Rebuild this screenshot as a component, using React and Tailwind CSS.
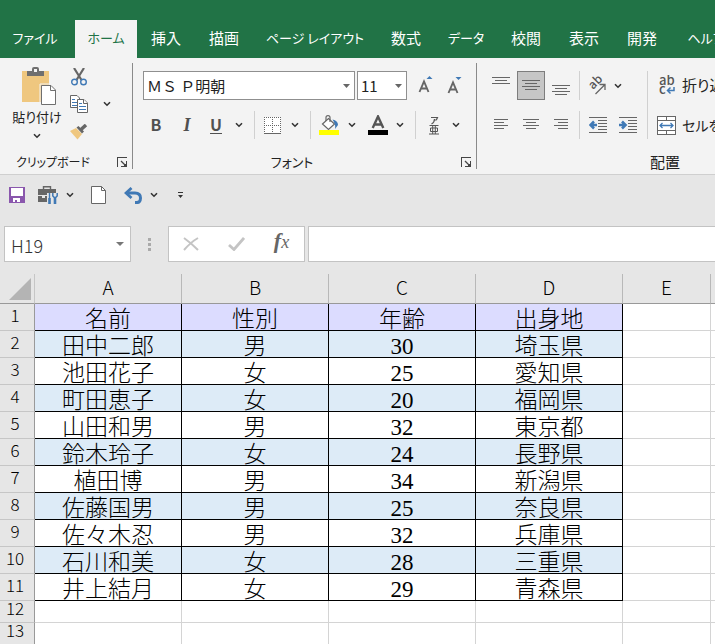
import React from 'react';
import clsx from 'clsx';

const tabs = [
  { label: 'ファイル', width: 'w-[70px] mr-[5px]', kana: true },
  { label: 'ホーム', width: 'w-[62px]', active: true, kana: true },
  { label: '挿入', width: 'w-[58px]' },
  { label: '描画', width: 'w-[58px]' },
  { label: 'ページ レイアウト', width: 'w-[124px]', kana: true },
  { label: '数式', width: 'w-[58px]' },
  { label: 'データ', width: 'w-[62px]', kana: true },
  { label: '校閲', width: 'w-[58px]' },
  { label: '表示', width: 'w-[58px]' },
  { label: '開発', width: 'w-[58px]' },
  { label: 'ヘルプ', width: 'w-[70px]', kana: true },
];

const columns = ['A', 'B', 'C', 'D', 'E', ''];

const people = [
  ['名前', '性別', '年齢', '出身地'],
  ['田中二郎', '男', '30', '埼玉県'],
  ['池田花子', '女', '25', '愛知県'],
  ['町田恵子', '女', '20', '福岡県'],
  ['山田和男', '男', '32', '東京都'],
  ['鈴木玲子', '女', '24', '長野県'],
  ['植田博', '男', '34', '新潟県'],
  ['佐藤国男', '男', '25', '奈良県'],
  ['佐々木忍', '男', '32', '兵庫県'],
  ['石川和美', '女', '28', '三重県'],
  ['井上結月', '女', '29', '青森県'],
];

function Chevron() {
  return (
    <svg width="8" height="6" viewBox="0 0 8 6" fill="none" stroke="#333" strokeWidth="1.6">
      <path d="M1 1.2 4 4.2 7 1.2" />
    </svg>
  );
}

function Menu({ label, className }) {
  return (
    <button aria-label={label} className={clsx('flex shrink-0 items-center justify-center', className)}>
      <Chevron />
    </button>
  );
}

function Tool({ label, className, children }) {
  return (
    <button aria-label={label} className={clsx('flex shrink-0 items-center justify-center', className)}>
      {children}
    </button>
  );
}

function Divider({ className }) {
  return <div className={clsx('w-px shrink-0 self-stretch bg-[#d0d0d0]', className)} />;
}

function Launcher({ label }) {
  return (
    <button aria-label={label}>
      <svg width="11" height="11" viewBox="0 0 11 11" fill="none" stroke="#444" shapeRendering="crispEdges">
        <path d="M.5 10V.5H10" />
        <path d="M4 4l5 5" strokeWidth="1.3" shapeRendering="auto" />
        <path d="M9.5 4v5.5H4" />
        <path d="M7 8.5h2M8.5 7v2" />
      </svg>
    </button>
  );
}

// Each line is [x, y, width]
function Lines({ lines, width = 18, height = 18 }) {
  return (
    <svg width={width} height={height} viewBox={`0 0 ${width} ${height}`} fill="#666" shapeRendering="crispEdges">
      {lines.map(([x, y, w]) => (
        <rect key={y} x={x} y={y} width={w} height="1" />
      ))}
    </svg>
  );
}

function IndentIcon({ right }) {
  return (
    <svg width="18" height="16" viewBox="0 0 18 16">
      <g fill="#666" shapeRendering="crispEdges">
        <rect width="18" height="1" />
        <rect x="9" y="3" width="9" height="1" />
        <rect x="9" y="6" width="9" height="1" />
        <rect x="9" y="9" width="9" height="1" />
        <rect x="9" y="12" width="9" height="1" />
        <rect y="15" width="18" height="1" />
      </g>
      <path
        d={right ? 'M0 8h6.500M3 4.500 6.500 8 3 11.500' : 'M8 8H1.500M5 4.500 1.500 8 5 11.500'}
        fill="none"
        stroke="#4079b5"
        strokeWidth="2.600"
      />
    </svg>
  );
}

function PasteIcon() {
  return (
    <svg width="34" height="38" viewBox="0 0 34 38">
      <rect y="4" width="27" height="31" fill="#efc77f" />
      <path d="M5 4h5V2q0-2 2-2h3q2 0 2 2v2h5v5H5z" fill="#6f6f6f" />
      <rect x="12" y="2" width="3" height="3" fill="#f3f3f3" />
      <path d="M18 36V17h11" fill="none" stroke="#f3f3f3" />
      <path d="M19.500 18.500H29l4.500 4.500v14.500h-14z" fill="#fff" stroke="#6f6f6f" />
      <path d="M28.500 18.500v5h5" fill="none" stroke="#6f6f6f" />
    </svg>
  );
}

function CutIcon() {
  return (
    <svg width="16" height="18" viewBox="0 0 16 18" fill="none">
      <path d="M3 0 10.500 12M13 0 5.500 12" stroke="#666" strokeWidth="2.200" />
      <circle cx="3.500" cy="14" r="2.800" stroke="#4079b5" strokeWidth="1.400" />
      <circle cx="12.500" cy="14" r="2.800" stroke="#4079b5" strokeWidth="1.400" />
    </svg>
  );
}

function CopyIcon() {
  return (
    <svg width="18" height="18" viewBox="0 0 18 18" fill="#fff" stroke="#666">
      <path d="M.5.5H7L9.500 3v9.500h-9z" />
      <path d="M2 4.500h3M2 7.500h5M2 10.500h5" stroke="#4079b5" />
      <path d="M7.500 4.500H14L17.500 8v9.500h-10z" />
      <path d="M13.500 4.500v4h4" />
      <path d="M9 8.500h3M9 11.500h7M9 14.500h7" stroke="#4079b5" />
    </svg>
  );
}

function BrushIcon() {
  return (
    <svg width="18" height="16" viewBox="0 0 18 16">
      <path d="M0 7 6 4l6 6-4.500 5.500z" fill="#efc77f" />
      <path d="M6.500 3.500 8.500 2l5.500 5.500-2 2z" fill="#666" />
      <path d="M11 5.500 16 1" stroke="#666" strokeWidth="3.500" />
    </svg>
  );
}

function ClipboardGroup() {
  return (
    <section className="flex w-[133px] shrink-0 flex-col border-r border-[#8a8a8a]">
      <div className="flex">
        <button className="ml-[11px] flex w-[52px] flex-col items-center pt-1 whitespace-nowrap">
          <span className="pl-1">
            <PasteIcon />
          </span>
          <span className="text-[13px] leading-6">貼り付け</span>
          <span className="pt-1">
            <Chevron />
          </span>
        </button>
        <div className="ml-1.5 flex flex-col">
          <Tool label="切り取り" className="h-[27px] w-5"><CutIcon /></Tool>
          <Tool label="コピー" className="h-7 w-5"><CopyIcon /></Tool>
          <Tool label="書式のコピー" className="h-7 w-5"><BrushIcon /></Tool>
        </div>
        <Menu label="コピーのオプション" className="mt-[27px] ml-3 h-7 w-3" />
      </div>
      <div className="mt-auto flex h-3.5 items-center pr-1 pl-4">
        <span className="mr-auto text-[12px]">クリップボード</span>
        <Launcher label="クリップボードの設定" />
      </div>
    </section>
  );
}

function SelectBox({ label, value, className }) {
  return (
    <div className={clsx('relative h-[29px] shrink-0', className)}>
      <select
        aria-label={label}
        defaultValue={value}
        className="h-full w-full appearance-none rounded-none border border-[#8f8f8f] bg-white px-[3px] text-[15px] leading-[27px] text-[#222] [font-feature-settings:normal]"
      >
        <option>{value}</option>
      </select>
      <svg className="pointer-events-none absolute top-[13px] right-[5px]" width="7" height="4" viewBox="0 0 7 4" fill="#666">
        <path d="M0 0h7L3.500 4z" />
      </svg>
    </div>
  );
}

function FontGroup() {
  return (
    <section className="flex w-[344px] shrink-0 flex-col border-r border-[#8a8a8a] pt-2 pl-2.5">
      <div className="mb-[11px] flex">
        <SelectBox label="フォント名" value="ＭＳ Ｐ明朝" className="w-[212px]" />
        <SelectBox label="フォント サイズ" value="11" className="ml-0.5 w-[50px]" />
        <Tool label="フォント サイズの拡大" className="ml-1 w-[30px]">
          <svg width="16" height="20" viewBox="0 0 16 20">
            <path d="M1.500 16 6 5.500 10.500 16M3 12.500h6" fill="none" stroke="#666" strokeWidth="1.900" />
            <path d="M8.500 3h6L11.500 0z" fill="#4079b5" />
          </svg>
        </Tool>
        <Tool label="フォント サイズの縮小" className="w-[28px]">
          <svg width="16" height="20" viewBox="0 0 16 20">
            <path d="M1.500 17 6 6.500 10.500 17M3 13.500h6" fill="none" stroke="#666" strokeWidth="1.900" />
            <path d="M8.500 1h6l-3 3z" fill="#4079b5" />
          </svg>
        </Tool>
      </div>
      <div className="flex h-7 text-[#505050]">
        <button className="w-[26px] pb-0.5 text-base font-bold">B</button>
        <button className="w-9 pb-0.5 font-['Liberation_Serif',serif] text-lg font-bold italic">I</button>
        <button className="w-[22px] pb-0.5 text-base font-bold underline underline-offset-2">U</button>
        <Menu label="下線の種類" className="w-6" />
        <Divider className="ml-[3px]" />
        <Tool label="罫線" className="w-[34px]">
          <svg width="17" height="17" viewBox="0 0 17 17" fill="none" stroke="#666" shapeRendering="crispEdges">
            <rect width="17" height="17" fill="#fff" stroke="none" />
            <path d="M0 .5h17M0 8.500h17M.5 0v16M8.500 0v16M16.500 0v16" strokeDasharray="1 1" />
            <path d="M0 16.500h17" />
          </svg>
        </Tool>
        <Menu label="罫線の種類" className="w-3" />
        <Divider className="ml-[9px]" />
        <Tool label="塗りつぶしの色" className="w-9">
          <svg width="20" height="20" viewBox="0 0 20 20" fill="none" stroke="#666" strokeWidth="1.200">
            <path d="M3.500 9 9.500 3.500l6 5.500-6 5.500z" fill="#fff" />
            <path d="M7 6V2.500Q7 .6 9 .6t2 1.900V7" />
            <path d="M13.500 4.500q5.500 1 5.500 5.500l-3 4q1-4-2.500-9.500z" fill="#4079b5" stroke="none" />
            <rect y="15" width="20" height="5" fill="#ff0" stroke="none" />
          </svg>
        </Tool>
        <Menu label="塗りつぶしの色の選択" className="w-2.5" />
        <Tool label="フォントの色" className="ml-[3px] w-9">
          <svg width="20" height="20" viewBox="0 0 20 20">
            <path d="M4.700 13 10 1.500 15.300 13M6.500 9.500h7" fill="none" stroke="#555" strokeWidth="2.400" />
            <rect y="15" width="20" height="5" />
          </svg>
        </Tool>
        <Menu label="フォントの色の選択" className="w-2" />
        <Divider className="ml-[11px]" />
        <Tool label="ふりがなの表示" className="w-9">
          <svg width="10" height="19" viewBox="0 0 10 19" fill="none" stroke="#555" shapeRendering="geometricPrecision">
            <path d="M2 1.500h6.500Q8 3 6.500 4.500M5.500 3Q5.500 6.500 2.500 8" strokeWidth="1.200" />
            <path d="M.5 9.500h9M0 18h10M1.500 12h7v3.500h-7zM3.700 9.500V18M6.300 9.500V18" />
          </svg>
        </Tool>
        <Menu label="ふりがなの設定" className="w-2" />
      </div>
      <div className="mt-auto flex h-3.5 items-center pr-1">
        <span className="flex-1 pr-5 text-center text-[13px]">フォント</span>
        <Launcher label="フォントの設定" />
      </div>
    </section>
  );
}

function AlignmentGroup() {
  return (
    <section className="flex w-[376px] shrink-0 flex-col pt-2">
      <div className="flex">
        <div className="ml-[9px] w-[161px] shrink-0">
          <div className="mb-[11px] flex h-[29px]">
            <Tool label="上揃え" className="w-[30px]">
              <Lines lines={[[0, 0, 18], [3, 3, 12], [0, 6, 18]]} />
            </Tool>
            <Tool label="上下中央揃え" className="mx-px w-7 border border-[#7d7d7d] bg-[#c6c6c6]">
              <Lines lines={[[0, 3, 18], [3, 6, 12], [0, 9, 18], [3, 12, 12]]} />
            </Tool>
            <Tool label="下揃え" className="w-[30px]">
              <Lines lines={[[0, 8, 18], [3, 11, 12], [0, 14, 18], [3, 17, 12]]} />
            </Tool>
            <Divider className="ml-[3px]" />
            <Tool label="方向" className="w-[34px]">
              <svg width="20" height="20" viewBox="0 0 20 20">
                <text x="6" y="14" transform="rotate(-45 6 14)" className="fill-[#555] text-[12px] font-medium">ab</text>
                <path d="M8.500 18 18 8.500M12.500 8.500H18V14" fill="none" stroke="#666" strokeWidth="1.300" />
              </svg>
            </Tool>
            <Menu label="方向の選択" className="w-2" />
          </div>
          <div className="flex h-7">
            <Tool label="左揃え" className="w-[30px]">
              <Lines width={14} height={12} lines={[[0, 0, 14], [0, 3, 10], [0, 6, 14], [0, 9, 10]]} />
            </Tool>
            <Tool label="中央揃え" className="w-[30px]">
              <Lines width={16} height={12} lines={[[0, 0, 16], [3, 3, 10], [0, 6, 16], [3, 9, 10]]} />
            </Tool>
            <Tool label="右揃え" className="w-[30px]">
              <Lines width={14} height={12} lines={[[0, 0, 14], [4, 3, 10], [0, 6, 14], [4, 9, 10]]} />
            </Tool>
            <Divider className="ml-[3px]" />
            <Tool label="インデントを減らす" className="w-9"><IndentIcon /></Tool>
            <Tool label="インデントを増やす" className="w-6"><IndentIcon right /></Tool>
          </div>
        </div>
        <Divider />
        <div className="shrink-0 pl-[9px]">
          <button className="mb-[11px] flex h-[29px] items-center gap-1.5 text-[15px] whitespace-nowrap">
            <svg width="19" height="22" viewBox="0 0 19 22">
              <text x="2" y="10" className="fill-[#555] text-[13px] font-medium">ab</text>
              <text x="2" y="19" className="fill-[#555] text-[13px] font-medium">c</text>
              <path d="M17 12v3.500h-6M13.500 12.500l-3 3 3 3" fill="none" stroke="#4079b5" strokeWidth="1.500" />
            </svg>
            折り返して全体を表示する
          </button>
          <button className="flex h-7 items-center gap-1.5 text-[14px] whitespace-nowrap">
            <svg width="19" height="19" viewBox="0 0 19 19" fill="none" stroke="#666">
              <rect x=".5" y=".5" width="18" height="18" fill="#fff" />
              <path d="M.5 4.500h18M.5 14.500h18M9.500 0v4.500M9.500 14.500V19" />
              <path d="M3 9.500h13M5.500 7 3 9.500 5.500 12M13.500 7 16 9.500 13.500 12" stroke="#4079b5" strokeWidth="1.300" />
            </svg>
            セルを結合して中央揃え
          </button>
        </div>
      </div>
      <div className="mt-auto flex h-3.5 items-center justify-center text-[15px]">配置</div>
    </section>
  );
}

function QuickAccess() {
  return (
    <div className="flex h-10 items-stretch">
      <Tool label="上書き保存" className="w-[34px]">
        <svg width="16" height="16" viewBox="0 0 16 16" fill="#8a57ad">
          <path d="M0 0h16v16H0z" />
          <path d="M2 1h12v8H2zM4 11h7v4H8v-2H6v2H4z" fill="#fff" />
        </svg>
      </Tool>
      <Tool label="ツール" className="w-7">
        <svg width="20" height="19" viewBox="0 0 20 19">
          <path d="M0 3h18v6H0zM0 10h18v6H0z" fill="#666" />
          <path d="M5.500 3V.7h7V3" fill="none" stroke="#666" strokeWidth="1.400" />
          <path d="M9 7h11v12H9z" fill="#e6e6e6" />
          <path d="M11.500 7v5" stroke="#4079b5" strokeWidth="1.400" />
          <path d="M11.500 12v6M17 11v7" stroke="#4079b5" strokeWidth="2.600" />
          <path d="M14.800 7v3l2.200 2 2.200-2V7" fill="none" stroke="#4079b5" strokeWidth="1.500" />
          <path d="M4 9h3v3H4z" fill="#e6e6e6" />
        </svg>
      </Tool>
      <Menu label="ツールの選択" className="w-4" />
      <Tool label="新規作成" className="w-10">
        <svg width="15" height="18" viewBox="0 0 15 18" fill="#fff" stroke="#666">
          <path d="M.5.5h10l4 4v13H.5z" />
          <path d="M10.500.5v4h4" fill="none" />
        </svg>
      </Tool>
      <Tool label="元に戻す" className="w-[30px]">
        <svg width="19" height="17" viewBox="0 0 19 17" fill="none" stroke="#4079b5">
          <path d="M2 6h9q5.500 0 5.500 5T12 15.500h-1" strokeWidth="3" />
          <path d="M7.500 1 2 6l5.500 5" strokeWidth="2.800" />
        </svg>
      </Tool>
      <Menu label="元に戻す操作の選択" className="w-3" />
      <Tool label="クイック アクセス ツール バーのカスタマイズ" className="w-10">
        <svg width="5" height="6" viewBox="0 0 5 6" fill="#333">
          <path d="M0 0h5v1H0zM0 3h5L2.500 6z" />
        </svg>
      </Tool>
    </div>
  );
}

function FormulaBar() {
  return (
    <div className="mt-[11px] mb-3 flex h-9 pl-1">
      <div className="relative w-[127px] shrink-0">
        <input
          aria-label="名前ボックス"
          defaultValue="H19"
          className="h-full w-full border border-[#c3c3c3] bg-white px-1.5 pt-0.5 text-[18px] font-light text-[#333]"
        />
        <svg className="absolute top-4 right-[7px]" width="8" height="4" viewBox="0 0 8 4" fill="#777">
          <path d="M0 0h8L4 4z" />
        </svg>
      </div>
      <svg className="mx-[17px] shrink-0 self-center" width="3" height="13" viewBox="0 0 3 13" fill="#aaa">
        <path d="M0 0h3v3H0zM0 5h3v3H0zM0 10h3v3H0z" />
      </svg>
      <div className="flex w-[137px] shrink-0 items-center border border-[#c3c3c3] bg-white">
        <Tool label="キャンセル" className="h-full w-11">
          <svg width="16" height="14" viewBox="0 0 16 14" fill="none" stroke="#c4c4c4" strokeWidth="2">
            <path d="M1 1q7 5 14 12M15 1Q8 5 1 13" />
          </svg>
        </Tool>
        <Tool label="入力" className="h-full w-[46px]">
          <svg width="17" height="14" viewBox="0 0 17 14" fill="none" stroke="#c4c4c4" strokeWidth="2.800">
            <path d="m1 8 5 4.500L16 1" />
          </svg>
        </Tool>
        <button className="h-full w-[45px] pb-1 font-['Liberation_Serif',serif] text-[22px] leading-none font-bold text-[#666] italic">
          f<span className="text-lg font-normal">x</span>
        </button>
      </div>
      <input aria-label="数式バー" className="ml-[3px] min-w-0 flex-1 border border-r-0 border-[#c3c3c3] bg-white" />
    </div>
  );
}

function RowHeader({ number, short }) {
  return (
    <th
      scope="row"
      className={clsx(
        'border-r border-b border-r-[#999] border-b-[#c6c6c6] p-0 pr-1 align-top text-[17px] font-light',
        short ? 'leading-[13px]' : 'leading-[22px]'
      )}
    >
      {number}
    </th>
  );
}

function Sheet() {
  return (
    <table className="w-full table-fixed border-separate border-spacing-0 text-center text-black">
      <colgroup>
        <col className="w-[35px]" />
        <col className="w-[147px]" />
        <col className="w-[147px]" />
        <col className="w-[147px]" />
        <col className="w-[147px]" />
        <col className="w-[88px]" />
        <col />
      </colgroup>
      <thead>
        <tr className="h-[30px]">
          <th aria-label="すべて選択" className="border-r border-b border-r-[#c6c6c6] border-b-[#999] p-0">
            <svg className="mr-[3px] ml-auto" width="22" height="22" viewBox="0 0 22 22" fill="#b4b4b4">
              <path d="M22 0v22H0z" />
            </svg>
          </th>
          {columns.map((column) => (
            <th
              key={column}
              scope="col"
              className="border-r border-b border-r-[#b8b8b8] border-b-[#999] p-0 align-top text-[19px] leading-[26px] font-light last:border-r-0"
            >
              {column}
            </th>
          ))}
        </tr>
      </thead>
      <tbody>
        {people.map((person, row) => (
          <tr key={row} className="h-[27px]">
            <RowHeader number={row + 1} />
            {person.map((value, i) => (
              <td
                key={i}
                className={clsx(
                  "border-r border-b border-black p-0 pt-[5px] font-['Liberation_Serif','Noto_Sans_CJK_JP',serif] text-[23px] leading-[21px]",
                  row > 0 && i === 2 ? 'font-normal' : 'font-light',
                  row === 0 ? 'bg-[#dcdcff]' : row % 2 ? 'bg-[#ddebf7]' : 'bg-white'
                )}
              >
                {value}
              </td>
            ))}
            <td className="border-r border-b border-[#d4d4d4] bg-white p-0" />
            <td className="border-b border-[#d4d4d4] bg-white p-0" />
          </tr>
        ))}
        {[12, 13].map((number) => (
          <tr key={number} className="h-[22px]">
            <RowHeader number={number} short />
            {columns.map((column) => (
              <td key={column} className="border-r border-b border-[#d4d4d4] bg-white p-0 last:border-r-0" />
            ))}
          </tr>
        ))}
      </tbody>
    </table>
  );
}

export default function App() {
  return (
    <div className="h-screen overflow-hidden bg-[#e6e6e6] font-['Noto_Sans_CJK_JP',sans-serif] text-[#222]">
      <nav className="flex h-[58px] items-end overflow-hidden bg-[#217346]">
        {tabs.map((tab) => (
          <button
            key={tab.label}
            className={clsx(
              "h-[38px] shrink-0 pb-0.5 whitespace-nowrap [font-feature-settings:'palt']",
              tab.width,
              tab.kana ? 'text-[13px]' : 'text-[15px]',
              tab.active ? 'bg-[#f3f3f3] text-[#217346]' : 'text-white'
            )}
          >
            {tab.label}
          </button>
        ))}
      </nav>
      <div className="flex h-[117px] overflow-hidden border-b border-[#cfcfcf] bg-[#f3f3f3] pt-[5px] pb-[5px] [font-feature-settings:'palt']">
        <ClipboardGroup />
        <FontGroup />
        <AlignmentGroup />
      </div>
      <QuickAccess />
      <FormulaBar />
      <Sheet />
    </div>
  );
}
